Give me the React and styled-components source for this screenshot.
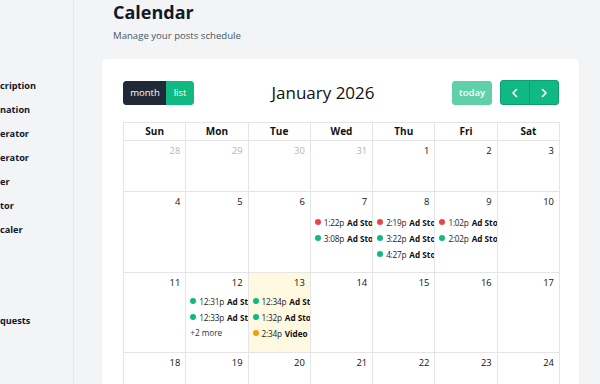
import React from "react";
import styled, { createGlobalStyle } from "styled-components";

const Global = createGlobalStyle`
  html, body { margin: 0; padding: 0; }
  body {
    font-family: "Open Sans", "Noto Sans", sans-serif;
    background: #f3f4f6;
    color: #111827;
    overflow: hidden;
  }
`;

const Layout = styled.div`
  display: flex;
  width: 600px;
  height: 384px;
  overflow: hidden;
`;

const Sidebar = styled.nav`
  width: 73px;
  flex: none;
  border-right: 1px solid #e5e7eb;
  background: #f3f4f6;
  padding-top: 74px;
  display: flex;
  flex-direction: column;
`;

const NavItem = styled.div`
  height: 24px;
  line-height: 24px;
  font-size: 9.2px;
  font-weight: 700;
  color: #111827;
  white-space: nowrap;
  margin-top: ${(p) => (p.$gap ? `${p.$gap}px` : "0")};
`;

const Main = styled.main`
  flex: 1;
  min-width: 0;
  padding: 0 21px 0 28px;
  display: flex;
  flex-direction: column;
`;

const Header = styled.header`
  flex: none;
  padding-left: 11px;
  height: 59px;
`;

const Title = styled.h1`
  margin: 0;
  font-size: 18px;
  line-height: 24px;
  font-weight: 700;
  color: #111827;
`;

const Subtitle = styled.p`
  margin: 5px 0 0;
  font-size: 9.6px;
  line-height: 14px;
  color: #4b5563;
`;

const Card = styled.section`
  flex: none;
  background: #fff;
  border-radius: 4px;
  box-shadow: 0 1px 2px rgba(0, 0, 0, 0.05);
  padding: 21px 20px 0 21px;
  height: 400px;
`;

const Toolbar = styled.div`
  display: flex;
  justify-content: space-between;
  align-items: center;
  height: 25px;
  margin-bottom: 17px;
`;

const Group = styled.div`
  display: flex;
`;

const Btn = styled.button`
  font-family: inherit;
  height: ${(p) => (p.$h ? p.$h : 24)}px;
  padding: 0;
  font-size: 9.5px;
  font-weight: ${(p) => (p.$bold ? 600 : 400)};
  color: #fff;
  border: 1px solid ${(p) => p.$border};
  background: ${(p) => p.$bg};
  display: flex;
  align-items: center;
  justify-content: center;
  width: ${(p) => p.$w}px;
  border-radius: 0;
  &:first-child { border-radius: 3px 0 0 3px; }
  &:last-child { border-radius: 0 3px 3px 0; }
  &:only-child { border-radius: 3px; }
  & + & { margin-left: -1px; }
`;

const MonthTitle = styled.h2`
  margin: 0;
  font-size: 17px;
  font-weight: 400;
  color: #111;
  line-height: 24px;
`;

const Right = styled.div`
  display: flex;
  gap: 8px;
  align-items: center;
`;

const Grid = styled.div`
  display: grid;
  grid-template-columns: repeat(7, 1fr);
  grid-template-rows: 18px 51px 81px 80px 80px;
  border-top: 1px solid #e5e5e5;
  border-left: 1px solid #e5e5e5;
  width: 436px;
`;

const HeadCell = styled.div`
  border-right: 1px solid #e5e5e5;
  border-bottom: 1px solid #e5e5e5;
  font-size: 10px;
  font-weight: 700;
  text-align: center;
  line-height: 17px;
  color: #111;
`;

const DayCell = styled.div`
  border-right: 1px solid #e5e5e5;
  border-bottom: 1px solid #e5e5e5;
  background: ${(p) => (p.$today ? "#fef9e0" : "#fff")};
  overflow: hidden;
  min-width: 0;
`;

const DayNum = styled.div`
  text-align: right;
  padding: 3px 5px 0;
  font-size: 9.4px;
  line-height: 14px;
  color: ${(p) => (p.$muted ? "#b5b5b5" : "#111")};
`;

const Events = styled.div`
  margin-top: ${(p) => p.$mt}px;
  padding-left: 2px;
`;

const Event = styled.div`
  display: flex;
  align-items: center;
  height: 16px;
  font-size: 8.2px;
  white-space: nowrap;
  overflow: hidden;
  color: #222;
`;

const Time = styled.span`
  letter-spacing: -0.2px;
`;

const Dot = styled.span`
  flex: none;
  width: 6px;
  height: 6px;
  border-radius: 50%;
  margin: 0 3px 0 2px;
  background: ${(p) => p.$c};
`;

const EvTitle = styled.b`
  margin-left: 3px;
  font-weight: 700;
  color: #111;
`;

const More = styled.div`
  font-size: 8.2px;
  height: 16px;
  line-height: 16px;
  padding-left: 2px;
  color: #333;
`;

const C = { r: "#ef4444", g: "#10b981", o: "#f59e0b" };

const events = {
  7: [["r", "1:22p", "Ad Story"], ["g", "3:08p", "Ad Story"]],
  8: [["r", "2:19p", "Ad Story"], ["g", "3:22p", "Ad Story"], ["g", "4:27p", "Ad Story"]],
  9: [["r", "1:02p", "Ad Story"], ["g", "2:02p", "Ad Story"]],
  12: [["g", "12:31p", "Ad Story"], ["g", "12:33p", "Ad Story"]],
  13: [["g", "12:34p", "Ad Story"], ["g", "1:32p", "Ad Story"], ["o", "2:34p", "Video"]],
};

const days = [28, 29, 30, 31, 1, 2, 3, 4, 5, 6, 7, 8, 9, 10, 11, 12, 13, 14, 15, 16, 17, 18, 19, 20, 21, 22, 23, 24];

const Chevron = ({ dir }) => (
  <svg width="10" height="10" viewBox="0 0 10 10" fill="none" stroke="#fff" strokeWidth="1.6" strokeLinecap="round" strokeLinejoin="round">
    {dir === "left" ? <path d="M6.5 1.5 3 5l3.5 3.5" /> : <path d="M3.5 1.5 7 5 3.5 8.5" />}
  </svg>
);

export default function App() {
  const nav = ["cription", "nation", "erator", "erator", "er", "tor", "caler"];
  return (
    <>
      <Global />
      <Layout>
        <Sidebar>
          {nav.map((n, i) => (
            <NavItem key={i}>{n}</NavItem>
          ))}
          <NavItem $gap={67}>quests</NavItem>
        </Sidebar>
        <Main>
          <Header>
            <Title>Calendar</Title>
            <Subtitle>Manage your posts schedule</Subtitle>
          </Header>
          <Card>
            <Toolbar>
              <Group>
                <Btn $bg="#1f2937" $border="#1f2937" $w={44}>month</Btn>
                <Btn $bg="#10b981" $border="#10b981" $w={28}>list</Btn>
              </Group>
              <MonthTitle>January 2026</MonthTitle>
              <Right>
                <Group>
                  <Btn $bg="#5fd0a7" $border="#5fd0a7" $w={40} $bold>today</Btn>
                </Group>
                <Group>
                  <Btn $bg="#10b981" $border="#0e9f6e" $w={30} $h={25}><Chevron dir="left" /></Btn>
                  <Btn $bg="#10b981" $border="#0e9f6e" $w={30} $h={25}><Chevron dir="right" /></Btn>
                </Group>
              </Right>
            </Toolbar>
            <Grid>
              {["Sun", "Mon", "Tue", "Wed", "Thu", "Fri", "Sat"].map((d) => (
                <HeadCell key={d}>{d}</HeadCell>
              ))}
              {days.map((d, i) => {
                const muted = i < 4;
                const ev = !muted && events[d];
                return (
                  <DayCell key={i} $today={!muted && d === 13}>
                    <DayNum $muted={muted}>{d}</DayNum>
                    {ev && (
                      <Events $mt={d >= 11 ? 3 : 5}>
                        {ev.map(([c, t, title], k) => (
                          <Event key={k}>
                            <Dot $c={C[c]} />
                            <Time>{t}</Time>
                            <EvTitle>{title}</EvTitle>
                          </Event>
                        ))}
                        {d === 12 && <More>+2 more</More>}
                      </Events>
                    )}
                  </DayCell>
                );
              })}
            </Grid>
          </Card>
        </Main>
      </Layout>
    </>
  );
}
